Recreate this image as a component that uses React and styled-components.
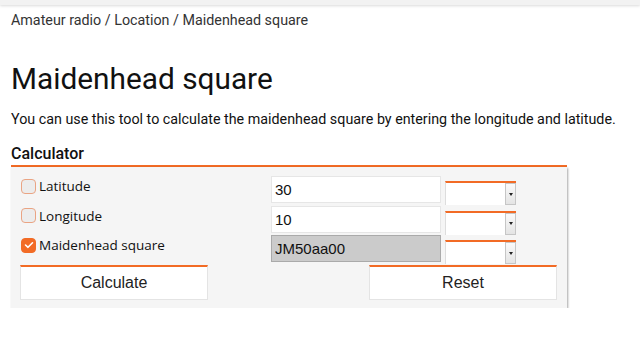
import React from 'react';
import styled, { createGlobalStyle } from 'styled-components';

const GlobalStyle = createGlobalStyle`
  html, body {
    margin: 0;
    padding: 0;
    background: #fff;
    font-family: Roboto, "Liberation Sans", Arial, sans-serif;
    color: #222;
  }
`;

const orange = '#f26b25';

const TopBar = styled.div`
  height: 5px;
  background: #f2f2f2;
  box-shadow: 0 1px 3px rgba(0, 0, 0, 0.15);
`;

const Page = styled.main`
  padding: 6px 11px 0 11px;
`;

const Breadcrumb = styled.nav`
  font-size: 14.3px;
  line-height: 18px;
  color: #333;
`;

const Title = styled.h1`
  margin: 32px 0 0 0;
  font-size: 29.8px;
  font-weight: 400;
  line-height: 36px;
  color: #111;
`;

const Intro = styled.p`
  margin: 13px 0 0 0;
  font-size: 14.3px;
  line-height: 18px;
  color: #111;
`;

const Section = styled.section`
  margin-top: 16px;
  width: 556px;
`;

const SectionTitle = styled.h2`
  margin: 0;
  font-size: 16px;
  font-weight: 500;
  line-height: 19px;
  color: #111;
  border-bottom: 2px solid ${orange};
  padding-bottom: 2px;
`;

const Panel = styled.div`
  background: #f5f5f5;
  box-shadow: 1px 1px 2px rgba(0, 0, 0, 0.35);
  padding: 8px 10px 8px 9px;
`;

const Row = styled.div`
  display: grid;
  grid-template-columns: 251px 170px 76px;
  align-items: center;
  height: 29px;
  margin-bottom: 0.5px;
`;

const Label = styled.label`
  display: flex;
  align-items: center;
  gap: 3px;
  font-family: "Open Sans", "Noto Sans", sans-serif;
  font-size: 13.5px;
  color: #111;
  align-self: start;
  padding-top: 2px;
  margin-left: 1px;
`;

const Box = styled.span`
  width: 15px;
  height: 15px;
  border-radius: 4px;
  box-sizing: border-box;
  border: 1px solid ${(p) => (p.checked ? orange : '#eaa483')};
  background: ${(p) => (p.checked ? orange : '#ececec')};
  display: flex;
  align-items: center;
  justify-content: center;
`;

const Input = styled.input`
  box-sizing: border-box;
  width: 170px;
  height: 27px;
  margin: 0;
  padding: 0 3px;
  border: 1px solid ${(p) => (p.readOnly ? '#aaa' : '#e6e6e6')};
  background: ${(p) => (p.readOnly ? '#cbcbcb' : '#fff')};
  font-family: "Liberation Sans", Arial, sans-serif;
  font-size: 15px;
  color: #111;
  outline: none;
`;

const SelectWrap = styled.div`
  display: flex;
  margin-left: 4px;
  width: 71px;
  height: 24px;
  box-sizing: border-box;
  border-top: 2px solid ${orange};
  border-left: 1px solid #ddd;
  background: #fff;
  align-self: end;
  margin-bottom: -1px;
`;

const Select = styled.select`
  flex: 1;
  appearance: none;
  border: none;
  background: transparent;
  margin: 0;
  padding: 0;
  outline: none;
`;

const Arrow = styled.span`
  width: 9px;
  border: 1px solid #c6c6c6;
  background: linear-gradient(#fafafa, #e4e4e4);
  display: flex;
  align-items: center;
  justify-content: center;
  &::after {
    content: '';
    border-left: 2.5px solid transparent;
    border-right: 2.5px solid transparent;
    border-top: 3px solid #222;
  }
`;

const Buttons = styled.div`
  display: flex;
  justify-content: space-between;
  margin-top: 2px;
`;

const Button = styled.button`
  width: 188px;
  height: 35px;
  box-sizing: border-box;
  margin: 0;
  background: #fff;
  border: 1px solid #e4e4e4;
  border-top: 2px solid ${orange};
  font-family: "Liberation Sans", Arial, sans-serif;
  font-size: 16px;
  color: #222;
  padding: 0;
`;

const Check = () => (
  <svg width="10" height="8" viewBox="0 0 10 8">
    <path d="M1.5 4 L4 6.3 L8.5 1.8" fill="none" stroke="#fff" strokeWidth="1.6" strokeLinecap="round" strokeLinejoin="round" />
  </svg>
);

const fields = [
  { label: 'Latitude', value: '30', checked: false },
  { label: 'Longitude', value: '10', checked: false },
  { label: 'Maidenhead square', value: 'JM50aa00', checked: true },
];

export default function App() {
  return (
    <>
      <GlobalStyle />
      <TopBar />
      <Page>
        <Breadcrumb>Amateur radio / Location / Maidenhead square</Breadcrumb>
        <Title>Maidenhead square</Title>
        <Intro>
          You can use this tool to calculate the maidenhead square by entering the longitude and latitude.
        </Intro>
        <Section>
          <SectionTitle>Calculator</SectionTitle>
          <Panel>
            {fields.map((f) => (
              <Row key={f.label}>
                <Label>
                  <Box checked={f.checked}>{f.checked && <Check />}</Box>
                  {f.label}
                </Label>
                <Input defaultValue={f.value} readOnly={f.checked} />
                <SelectWrap>
                  <Select defaultValue="">
                    <option value=""></option>
                  </Select>
                  <Arrow />
                </SelectWrap>
              </Row>
            ))}
            <Buttons>
              <Button>Calculate</Button>
              <Button>Reset</Button>
            </Buttons>
          </Panel>
        </Section>
      </Page>
    </>
  );
}
